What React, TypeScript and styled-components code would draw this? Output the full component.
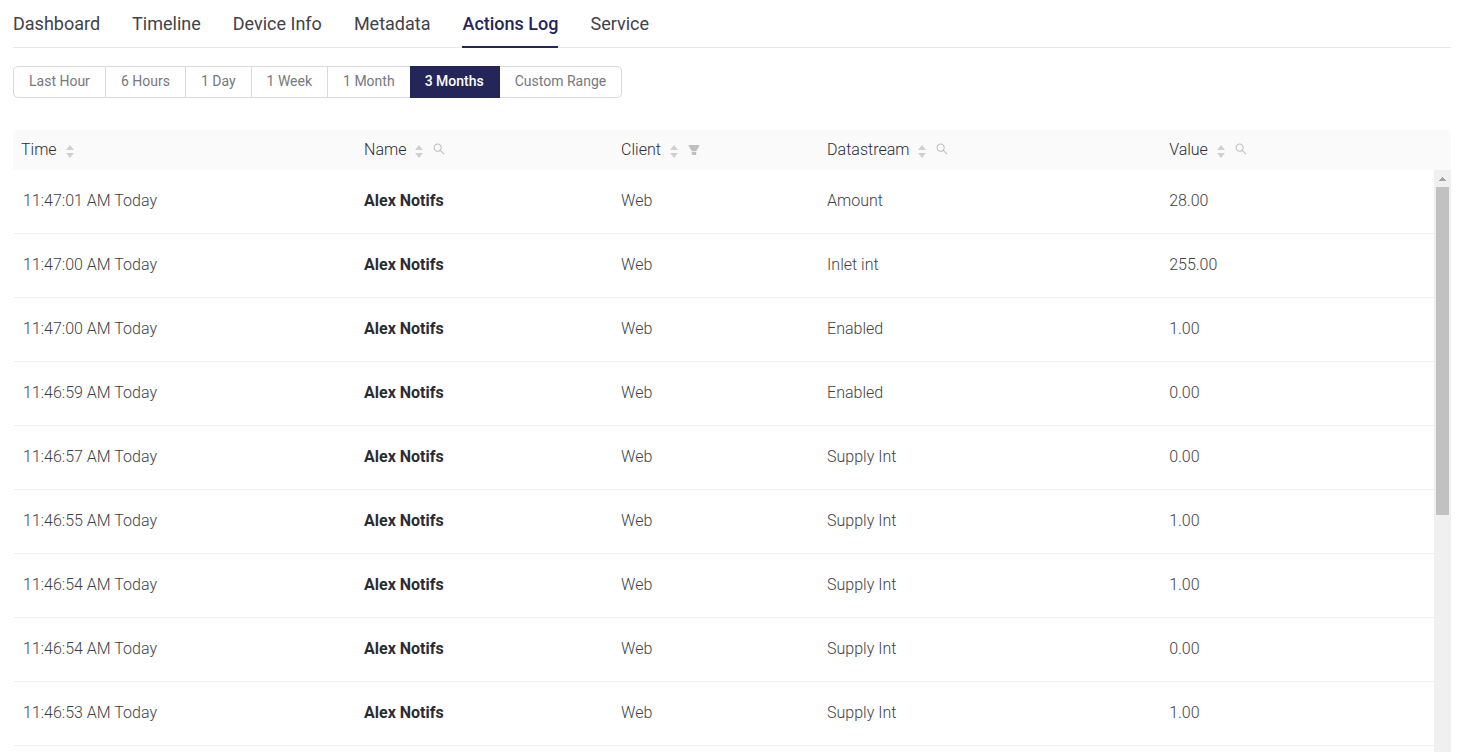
import React, { useState } from "react";
import styled, { createGlobalStyle } from "styled-components";
import { AiFillFilter, AiOutlineSearch } from "react-icons/ai";

const GlobalStyle = createGlobalStyle`
  *, *::before, *::after { box-sizing: border-box; }
  body {
    margin: 0;
    background: #fff;
    color: #2b2c33;
    font-family: Roboto, "Liberation Sans", sans-serif;
  }
  button { font-family: inherit; cursor: pointer; }
`;

const Page = styled.main`
  display: flex;
  flex-direction: column;
  height: 100vh;
  padding: 0 18px 0 13px;
  overflow: hidden;
`;

const Tabs = styled.nav`
  display: flex;
  flex: none;
  gap: 32px;
  height: 48px;
  box-shadow: inset 0 -1px #e8e8e8;
`;

const Tab = styled.a<{ $active: boolean }>`
  height: 48px;
  font-size: 18px;
  line-height: 48px;
  font-weight: ${(p) => (p.$active ? 500 : 400)};
  color: ${(p) => (p.$active ? "#24265a" : "#414247")};
  box-shadow: ${(p) => (p.$active ? "inset 0 -2px #24265a" : "none")};
  text-decoration: none;
  white-space: nowrap;
`;

const RangeGroup = styled.div`
  display: flex;
  flex: none;
  margin: 18px 0 32px;
`;

const RangeButton = styled.button<{ $active: boolean }>`
  height: 32px;
  margin-left: ${(p) => (p.$active ? "-1px" : "0")};
  padding: 0 15px 2px;
  border: 1px solid ${(p) => (p.$active ? "#24265a" : "#d9d9d9")};
  border-left-width: 0;
  background: ${(p) => (p.$active ? "#24265a" : "#fff")};
  color: ${(p) => (p.$active ? "#fff" : "#77787c")};
  font-size: 14px;
  line-height: 28px;
  font-weight: ${(p) => (p.$active ? 500 : 400)};
  white-space: nowrap;

  &:first-child {
    margin-left: 0;
    border-left-width: 1px;
    border-radius: 5px 0 0 5px;
  }
  &:last-child {
    border-radius: 0 5px 5px 0;
  }
`;

const LogPanel = styled.section`
  display: flex;
  flex: 1;
  min-height: 0;
  border-radius: 4px 4px 0 0;
  overflow: hidden;
`;

const TableViewport = styled.div`
  flex: 1;
  min-width: 0;
  overflow: hidden;
`;

const LogTable = styled.table`
  width: 100%;
  table-layout: fixed;
  border-collapse: separate;
  border-spacing: 0;
  font-size: 16px;
  font-weight: 300;
`;

const Column = styled.col<{ $width: string }>`
  width: ${(p) => p.$width};
`;

const HeadCell = styled.th`
  height: 40px;
  padding: 0 8px;
  background: #fafafa;
  font-weight: 300;
  text-align: left;
`;

const HeadContent = styled.div`
  display: flex;
  align-items: center;
  line-height: 40px;
`;

const IconButton = styled.button`
  display: flex;
  margin-left: 8px;
  padding: 0;
  border: 0;
  background: none;
  color: #bfbfbf;
`;

const SearchButton = styled(IconButton)`
  padding-bottom: 2px;
`;

const SortButton = styled(IconButton)`
  margin-left: 9px;
  margin-right: 1px;
  padding-top: 3px;
`;

const Cell = styled.td<{ $strong?: boolean }>`
  height: 64px;
  padding: 0 8px 2px;
  border-bottom: 1px solid #f0f0f0;
  color: ${(p) => (p.$strong ? "#2b2c33" : "#3e3f45")};
  font-weight: ${(p) => (p.$strong ? 700 : 300)};

  &:first-child {
    border-left: 1px solid #fff;
    padding-left: 9px;
  }
`;

const ScrollColumn = styled.div`
  display: flex;
  flex-direction: column;
  flex: none;
  width: 17px;
`;

const ScrollCorner = styled.div`
  height: 40px;
  background: #fafafa;
`;

const ScrollTrack = styled.div`
  flex: 1;
  padding: 0 2px;
  background: #f0f0f0;
`;

const ScrollArrow = styled.button`
  display: flex;
  align-items: center;
  justify-content: center;
  width: 100%;
  height: 17px;
  padding: 0;
  border: 0;
  background: none;
`;

const ScrollThumb = styled.div`
  height: 328px;
  background: #c1c1c1;
`;

const tabs = ["Dashboard", "Timeline", "Device Info", "Metadata", "Actions Log", "Service"];
const ranges = ["Last Hour", "6 Hours", "1 Day", "1 Week", "1 Month", "3 Months", "Custom Range"];

type Tool = "search" | "filter";
const columns: { title: string; width: string; tool?: Tool }[] = [
  { title: "Time", width: "24.14%" },
  { title: "Name", width: "18.09%", tool: "search" },
  { title: "Client", width: "14.5%", tool: "filter" },
  { title: "Datastream", width: "24.07%", tool: "search" },
  { title: "Value", width: "19.2%", tool: "search" },
];

const entries = [
  { time: "11:47:01 AM Today", stream: "Amount", value: "28.00" },
  { time: "11:47:00 AM Today", stream: "Inlet int", value: "255.00" },
  { time: "11:47:00 AM Today", stream: "Enabled", value: "1.00" },
  { time: "11:46:59 AM Today", stream: "Enabled", value: "0.00" },
  { time: "11:46:57 AM Today", stream: "Supply Int", value: "0.00" },
  { time: "11:46:55 AM Today", stream: "Supply Int", value: "1.00" },
  { time: "11:46:54 AM Today", stream: "Supply Int", value: "1.00" },
  { time: "11:46:54 AM Today", stream: "Supply Int", value: "0.00" },
  { time: "11:46:53 AM Today", stream: "Supply Int", value: "1.00" },
];

function SortIcon() {
  return (
    <svg width="8" height="13" viewBox="0 0 8 13" fill="#d0d0d0" aria-hidden="true">
      <path d="M4 0L8 5H0ZM0 8H8L4 13Z" />
    </svg>
  );
}

export default function App() {
  const [tab, setTab] = useState("Actions Log");
  const [range, setRange] = useState("3 Months");

  return (
    <>
      <GlobalStyle />
      <Page>
        <Tabs>
          {tabs.map((name) => (
            <Tab
              key={name}
              href="#"
              $active={name === tab}
              aria-current={name === tab ? "page" : undefined}
              onClick={() => setTab(name)}
            >
              {name}
            </Tab>
          ))}
        </Tabs>
        <RangeGroup role="group" aria-label="Time range">
          {ranges.map((name) => (
            <RangeButton
              key={name}
              type="button"
              $active={name === range}
              aria-pressed={name === range}
              onClick={() => setRange(name)}
            >
              {name}
            </RangeButton>
          ))}
        </RangeGroup>
        <LogPanel>
          <TableViewport>
            <LogTable>
              <colgroup>
                {columns.map((c) => (
                  <Column key={c.title} $width={c.width} />
                ))}
              </colgroup>
              <thead>
                <tr>
                  {columns.map((c) => (
                    <HeadCell key={c.title} scope="col">
                      <HeadContent>
                        {c.title}
                        <SortButton type="button" aria-label={`Sort by ${c.title}`}>
                          <SortIcon />
                        </SortButton>
                        {c.tool === "search" && (
                          <SearchButton type="button" aria-label={`Search ${c.title}`}>
                            <AiOutlineSearch size={14} />
                          </SearchButton>
                        )}
                        {c.tool === "filter" && (
                          <IconButton type="button" aria-label={`Filter ${c.title}`}>
                            <AiFillFilter size={14} />
                          </IconButton>
                        )}
                      </HeadContent>
                    </HeadCell>
                  ))}
                </tr>
              </thead>
              <tbody>
                {entries.map((e, i) => (
                  <tr key={i}>
                    <Cell>{e.time}</Cell>
                    <Cell $strong>Alex Notifs</Cell>
                    <Cell>Web</Cell>
                    <Cell>{e.stream}</Cell>
                    <Cell>{e.value}</Cell>
                  </tr>
                ))}
              </tbody>
            </LogTable>
          </TableViewport>
          <ScrollColumn>
            <ScrollCorner />
            <ScrollTrack>
              <ScrollArrow type="button" aria-label="Scroll up">
                <svg width="7" height="4" viewBox="0 0 7 4" fill="#a3a3a3" aria-hidden="true">
                  <path d="M3 0h1v1h1v1h1v1h1v1H0V3h1V2h1V1h1Z" />
                </svg>
              </ScrollArrow>
              <ScrollThumb />
            </ScrollTrack>
          </ScrollColumn>
        </LogPanel>
      </Page>
    </>
  );
}
